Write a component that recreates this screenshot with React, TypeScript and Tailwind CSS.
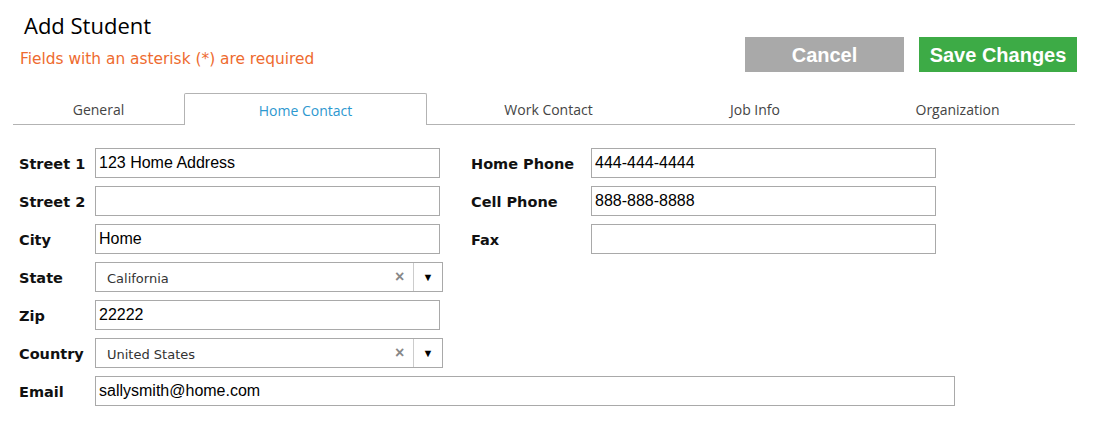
import React from 'react';

const labelFont = { fontFamily: '"DejaVu Sans", Verdana, sans-serif' };

const tabs = [
  { name: 'General', w: 'w-[171px]' },
  { name: 'Home Contact', w: 'w-[243px]', active: true },
  { name: 'Work Contact', w: 'w-[243px]' },
  { name: 'Job Info', w: 'w-[170px]' },
  { name: 'Organization', w: 'w-[235px]' },
];

const TextField = ({ value, wide }: { value?: string; wide?: boolean }) => (
  <div
    className={`h-[30px] ${wide ? 'w-[860px]' : 'w-[345px]'} border border-[#a9a9a9] bg-white px-[3px] flex items-center text-[16px] text-black font-['Liberation_Sans',Arial,sans-serif]`}
  >
    {value}
  </div>
);

const SelectField = ({ value }: { value: string }) => (
  <div className="h-[30px] w-[348px] border border-[#a9a9a9] bg-white flex items-center">
    <span className="flex-1 pl-[11px] pt-[4px] text-[13px] text-[#333]" style={labelFont}>
      {value}
    </span>
    <span className="w-[18px] text-[#888] text-[16px] font-bold leading-none font-['Liberation_Sans',Arial,sans-serif]">×</span>
    <span className="h-[28px] border-l border-[#ccc] w-[29px] flex items-center justify-center text-[11px] text-black">▼</span>
  </div>
);

const Row = ({ label, children, w = 'w-[76px]' }: { label: string; children: React.ReactNode; w?: string }) => (
  <div className="flex items-center h-[30px]">
    <label className={`${w} pt-[4px] text-[14.5px] font-bold text-[#111]`} style={labelFont}>
      {label}
    </label>
    {children}
  </div>
);

export default function App() {
  return (
    <div className="w-[1099px] h-[437px] bg-white relative">
      {/* Header */}
      <div className="flex justify-between">
        <div className="pt-[10px]">
          <h1 className="pl-[24px] text-[22px] leading-[30px] text-black font-['Open_Sans','Noto_Sans',sans-serif]">Add Student</h1>
          <p className="pl-[20px] mt-[8px] text-[15.4px] text-[#ee6b2f]" style={labelFont}>
            Fields with an asterisk (*) are required
          </p>
        </div>
        <div className="flex gap-[15px] pt-[37px] pr-[22px] font-['Liberation_Sans',Arial,sans-serif]">
          <button className="w-[159px] h-[35px] bg-[#a9a9a9] text-white text-[20px] font-bold">Cancel</button>
          <button className="w-[158px] h-[35px] bg-[#3dab46] text-white text-[20px] font-bold">Save Changes</button>
        </div>
      </div>

      {/* Tabs */}
      <div className="mt-[21px] ml-[13px] w-[1062px] flex border-b border-[#b3b3b3] font-['Open_Sans','Noto_Sans',sans-serif] text-[14px]">
        {tabs.map((t) =>
          t.active ? (
            <div
              key={t.name}
              className={`${t.w} h-[32px] pt-[2px] -mb-px border border-b-0 border-[#b3b3b3] rounded-t-[2px] bg-white flex items-center justify-center text-[#2d98cf]`}
            >
              {t.name}
            </div>
          ) : (
            <div key={t.name} className={`${t.w} h-[31px] pt-[2px] flex items-center justify-center text-[#444]`}>
              {t.name}
            </div>
          )
        )}
      </div>

      {/* Form */}
      <div className="pl-[19px] pt-[23px] flex flex-col gap-[8px]">
        <div className="flex">
          <div className="flex flex-col gap-[8px]">
            <Row label="Street 1"><TextField value="123 Home Address" /></Row>
            <Row label="Street 2"><TextField /></Row>
            <Row label="City"><TextField value="Home" /></Row>
            <Row label="State"><SelectField value="California" /></Row>
            <Row label="Zip"><TextField value="22222" /></Row>
            <Row label="Country"><SelectField value="United States" /></Row>
          </div>
          <div className="ml-[28px] flex flex-col gap-[8px]">
            <Row label="Home Phone" w="w-[120px]"><TextField value="444-444-4444" /></Row>
            <Row label="Cell Phone" w="w-[120px]"><TextField value="888-888-8888" /></Row>
            <Row label="Fax" w="w-[120px]"><TextField /></Row>
          </div>
        </div>
        <Row label="Email"><TextField value="sallysmith@home.com" wide /></Row>
      </div>
    </div>
  );
}
